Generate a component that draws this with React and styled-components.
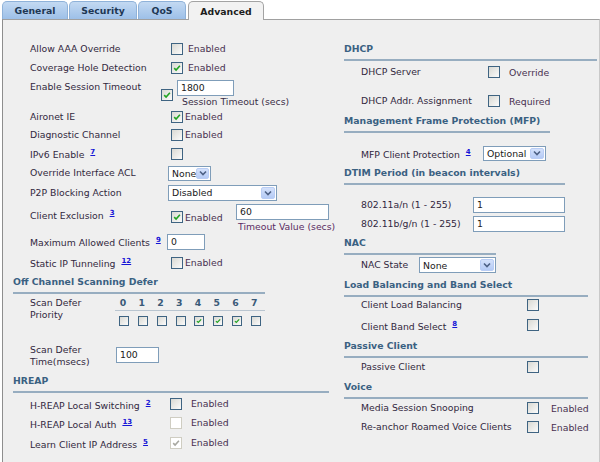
import React from "react";
import styled, { createGlobalStyle } from "styled-components";

const GlobalStyle = createGlobalStyle`
  body {
    margin: 0;
    background: #ffffff;
    font-family: "DejaVu Sans", Verdana, sans-serif;
    font-size: 9.3px;
  }
`;

const Page = styled.div`
  width: 600px;
  height: 462px;
  display: flex;
  flex-direction: column;
  overflow: hidden;
`;

const TabBar = styled.div`
  display: flex;
  align-items: flex-end;
  gap: 1px;
  height: 19px;
  padding-left: 2px;
  box-sizing: border-box;
`;

const Tab = styled.div`
  width: ${({ w }) => w}px;
  height: ${({ active }) => (active ? 19 : 18)}px;
  margin-bottom: ${({ active }) => (active ? -1 : 0)}px;
  margin-left: ${({ active }) => (active ? 1 : 0)}px;
  box-sizing: border-box;
  border: 1px solid ${({ active }) => (active ? "#a3a3a3" : "#8fb2d9")};
  border-bottom: none;
  border-radius: 5px 5px 0 0;
  background: ${({ active }) =>
    active ? "#f2f2f2" : "linear-gradient(#c3d9f2, #9dc0e8)"};
  color: ${({ active }) => (active ? "#1d1d1d" : "#1e3754")};
  font-weight: bold;
  font-size: 9.3px;
  display: flex;
  align-items: center;
  justify-content: center;
  position: relative;
  z-index: ${({ active }) => (active ? 2 : 1)};
`;

const Panel = styled.div`
  flex: 1;
  display: flex;
  margin-left: 2px;
  background: #efefef;
  border-top: 1px solid #a0a0a0;
  border-left: 1px solid #8e8e8e;
  border-right: 1px solid #c9c9c9;
`;

const Column = styled.div`
  width: ${({ w }) => w}px;
  box-sizing: border-box;
  padding-left: ${({ pl }) => pl}px;
  display: flex;
  flex-direction: column;
  flex: none;
`;

const Header = styled.div`
  margin-top: ${({ mt }) => mt || 0}px;
  width: ${({ w }) => w}px;
  line-height: 14px;
  padding-bottom: 3px;
  border-bottom: 2px solid #97adc0;
  font-weight: bold;
  color: #3a6182;
`;

const Row = styled.div`
  display: flex;
  align-items: ${({ top }) => (top ? "flex-start" : "center")};
  height: ${({ h }) => h}px;
  margin-top: ${({ mt }) => mt || 0}px;
  padding-left: 17px;
`;

const Label = styled.div`
  width: ${({ w }) => w || 137}px;
  margin-top: ${({ mt }) => mt || 0}px;
  flex: none;
  line-height: 12px;
  color: #32283e;
  white-space: nowrap;
`;

const Text = styled.span`
  margin-left: ${({ ml }) => ml || 0}px;
  margin-top: ${({ mt }) => mt || 0}px;
  width: ${({ w }) => (w ? `${w}px` : "auto")};
  flex: none;
  line-height: 12px;
  color: #48304f;
  white-space: nowrap;
`;

const Note = styled.a`
  margin-left: 3px;
  font-size: 7px;
  font-weight: bold;
  color: #1515d6;
  text-decoration: underline;
  vertical-align: 4px;
`;

const Box = styled.span`
  width: ${({ size }) => size}px;
  height: ${({ size }) => size}px;
  margin-left: ${({ ml }) => ml || 0}px;
  margin-top: ${({ mt }) => mt || 0}px;
  flex: none;
  box-sizing: border-box;
  border: 1px solid ${({ disabled }) => (disabled ? "#cfcdc2" : "#3f6482")};
  background: ${({ disabled }) =>
    disabled ? "#ffffff" : "linear-gradient(135deg, #d9d9d3, #fbfbfb)"};
  display: flex;
  align-items: center;
  justify-content: center;
`;

const Check = ({ checked, disabled, size = 12, ml, mt }) => (
  <Box size={size} ml={ml} mt={mt} disabled={disabled}>
    {checked && (
      <svg width={size - 4} height={size - 4} viewBox="0 0 8 8">
        <path
          d="M1.2 4.1 L3.1 6 L6.9 1.8"
          fill="none"
          stroke={disabled ? "#a7a7a0" : "#22a322"}
          strokeWidth="1.6"
        />
      </svg>
    )}
  </Box>
);

const Input = styled.div`
  width: ${({ w }) => w}px;
  height: 16px;
  margin-left: ${({ ml }) => ml || 0}px;
  margin-top: ${({ mt }) => mt || 0}px;
  flex: none;
  box-sizing: border-box;
  border: 1px solid #7f9db9;
  background: #ffffff;
  padding-left: 3px;
  line-height: 14px;
  color: #202020;
`;

const SelectBox = styled.div`
  width: ${({ w }) => w}px;
  height: ${({ h }) => h || 15}px;
  margin-left: ${({ ml }) => ml || 0}px;
  flex: none;
  box-sizing: border-box;
  border: 1px solid #7f9db9;
  background: #ffffff;
  display: flex;
  align-items: center;
  justify-content: space-between;
  padding: 0 1px 0 3px;
  color: #202020;
`;

const Arrow = styled.span`
  width: 14px;
  height: calc(100% - 2px);
  box-sizing: border-box;
  border: 1px solid #b9cdf5;
  border-radius: 2px;
  background: linear-gradient(#d4e1fb, #b5cbf6);
  display: flex;
  align-items: center;
  justify-content: center;
`;

const Select = ({ value, w, h, ml }) => (
  <SelectBox w={w} h={h} ml={ml}>
    <span>{value}</span>
    <Arrow>
      <svg width="8" height="6" viewBox="0 0 8 6">
        <path d="M1 1.5 L4 4.5 L7 1.5" fill="none" stroke="#4d6185" strokeWidth="1.6" />
      </svg>
    </Arrow>
  </SelectBox>
);

const Stack = styled.div`
  display: flex;
  flex-direction: column;
  margin-left: ${({ ml }) => ml || 0}px;
`;

const Caption = styled.span`
  margin-left: ${({ ml }) => ml || 0}px;
  margin-top: ${({ mt }) => mt || 0}px;
  line-height: 12px;
  color: ${({ purple }) => (purple ? "#5a2b63" : "#3a2e47")};
  white-space: nowrap;
`;

const PriorityGrid = styled.div`
  width: 150px;
  margin-top: 3px;
  display: grid;
  grid-template-columns: repeat(8, 1fr);
`;

const PriorityNum = styled.div`
  height: 13px;
  line-height: 12px;
  border-bottom: 1px solid #b9c5d0;
  text-align: center;
  font-weight: bold;
  color: #3a5a78;
  padding-right: 3px;
`;

const PriorityCell = styled.div`
  display: flex;
  justify-content: center;
  padding-top: 5px;
`;

const priorities = [false, false, false, false, true, true, true, false];

export default function App() {
  return (
    <Page>
      <GlobalStyle />
      <TabBar>
        <Tab w={66}>General</Tab>
        <Tab w={68}>Security</Tab>
        <Tab w={48}>QoS</Tab>
        <Tab w={76} active>
          Advanced
        </Tab>
      </TabBar>
      <Panel>
        <Column w={329} pl={10}>
          <Row h={18} mt={20}>
            <Label>Allow AAA Override</Label>
            <Check ml={4} />
            <Text ml={5}>Enabled</Text>
          </Row>
          <Row h={18} mt={1}>
            <Label>Coverage Hole Detection</Label>
            <Check ml={4} checked />
            <Text ml={5}>Enabled</Text>
          </Row>
          <Row h={31} top>
            <Label w={131} mt={4}>
              Enable Session Timeout
            </Label>
            <Check mt={12} checked />
            <Stack ml={4}>
              <Input w={57} mt={3}>
                1800
              </Input>
              <Caption ml={5}>Session Timeout (secs)</Caption>
            </Stack>
          </Row>
          <Row h={18}>
            <Label>Aironet IE</Label>
            <Check ml={4} checked />
            <Text ml={2}>Enabled</Text>
          </Row>
          <Row h={18}>
            <Label>Diagnostic Channel</Label>
            <Check ml={4} />
            <Text ml={2}>Enabled</Text>
          </Row>
          <Row h={19}>
            <Label>
              IPv6 Enable <Note>7</Note>
            </Label>
            <Check ml={4} />
          </Row>
          <Row h={20}>
            <Label>Override Interface ACL</Label>
            <Select value="None" w={43} ml={1} />
          </Row>
          <Row h={19}>
            <Label>P2P Blocking Action</Label>
            <Select value="Disabled" w={109} h={16} ml={1} />
          </Row>
          <Row h={30} top>
            <Label mt={5}>
              Client Exclusion <Note>3</Note>
            </Label>
            <Check ml={4} mt={9} checked />
            <Text ml={2} mt={10} w={51}>
              Enabled
            </Text>
            <Stack>
              <Input w={93} mt={2}>
                60
              </Input>
              <Caption ml={2} mt={1} purple>
                Timeout Value (secs)
              </Caption>
            </Stack>
          </Row>
          <Row h={19}>
            <Label>
              Maximum Allowed Clients <Note>9</Note>
            </Label>
            <Input w={38}>0</Input>
          </Row>
          <Row h={23}>
            <Label>
              Static IP Tunneling <Note>12</Note>
            </Label>
            <Check ml={4} />
            <Text ml={2}>Enabled</Text>
          </Row>
          <Header w={252} mt={1}>
            Off Channel Scanning Defer
          </Header>
          <Row h={37} top>
            <Label w={85} mt={3}>
              Scan Defer
              <br />
              Priority
            </Label>
            <PriorityGrid>
              {priorities.map((_, i) => (
                <PriorityNum key={i}>{i}</PriorityNum>
              ))}
              {priorities.map((on, i) => (
                <PriorityCell key={i}>
                  <Check size={10} checked={on} />
                </PriorityCell>
              ))}
            </PriorityGrid>
          </Row>
          <Row h={42} top>
            <Label w={86} mt={13}>
              Scan Defer
              <br />
              Time(msecs)
            </Label>
            <Input w={43} mt={16}>
              100
            </Input>
          </Row>
          <Header w={316} mt={1}>
            HREAP
          </Header>
          <Row h={18} mt={2}>
            <Label w={140}>
              H-REAP Local Switching <Note>2</Note>
            </Label>
            <Check />
            <Text ml={9}>Enabled</Text>
          </Row>
          <Row h={18} mt={1}>
            <Label w={140}>
              H-REAP Local Auth <Note>13</Note>
            </Label>
            <Check disabled />
            <Text ml={9}>Enabled</Text>
          </Row>
          <Row h={18} mt={2}>
            <Label w={140}>
              Learn Client IP Address <Note>5</Note>
            </Label>
            <Check disabled checked />
            <Text ml={9}>Enabled</Text>
          </Row>
        </Column>

        <Column w={265} pl={12}>
          <Header w={253} mt={22}>
            DHCP
          </Header>
          <Row h={22}>
            <Label w={127}>DHCP Server</Label>
            <Check />
            <Text ml={9} mt={2}>
              Override
            </Text>
          </Row>
          <Row h={20} mt={8}>
            <Label w={127}>DHCP Addr. Assignment</Label>
            <Check />
            <Text ml={9} mt={2}>
              Required
            </Text>
          </Row>
          <Header w={206} mt={3}>
            Management Frame Protection (MFP)
          </Header>
          <Row h={18} mt={11}>
            <Label w={122}>
              MFP Client Protection <Note>4</Note>
            </Label>
            <Select value="Optional" w={63} />
          </Row>
          <Header w={221} mt={4}>
            DTIM Period (in beacon intervals)
          </Header>
          <Row h={18} mt={11}>
            <Label w={112}>802.11a/n (1 - 255)</Label>
            <Input w={92}>1</Input>
          </Row>
          <Row h={18} mt={1}>
            <Label w={112}>802.11b/g/n (1 - 255)</Label>
            <Input w={92}>1</Input>
          </Row>
          <Header w={152} mt={3}>
            NAC
          </Header>
          <Row h={20}>
            <Label w={58}>NAC State</Label>
            <Select value="None" w={77} h={16} />
          </Row>
          <Header w={244} mt={3}>
            Load Balancing and Band Select
          </Header>
          <Row h={16}>
            <Label w={166}>Client Load Balancing</Label>
            <Check />
          </Row>
          <Row h={18} mt={3}>
            <Label w={166}>
              Client Band Select <Note>8</Note>
            </Label>
            <Check />
          </Row>
          <Header w={244} mt={5}>
            Passive Client
          </Header>
          <Row h={18}>
            <Label w={166}>Passive Client</Label>
            <Check />
          </Row>
          <Header w={244} mt={4}>
            Voice
          </Header>
          <Row h={18}>
            <Label w={166}>Media Session Snooping</Label>
            <Check />
            <Text ml={12} mt={2}>
              Enabled
            </Text>
          </Row>
          <Row h={18} mt={1}>
            <Label w={166}>Re-anchor Roamed Voice Clients</Label>
            <Check />
            <Text ml={12} mt={2}>
              Enabled
            </Text>
          </Row>
        </Column>
      </Panel>
    </Page>
  );
}
